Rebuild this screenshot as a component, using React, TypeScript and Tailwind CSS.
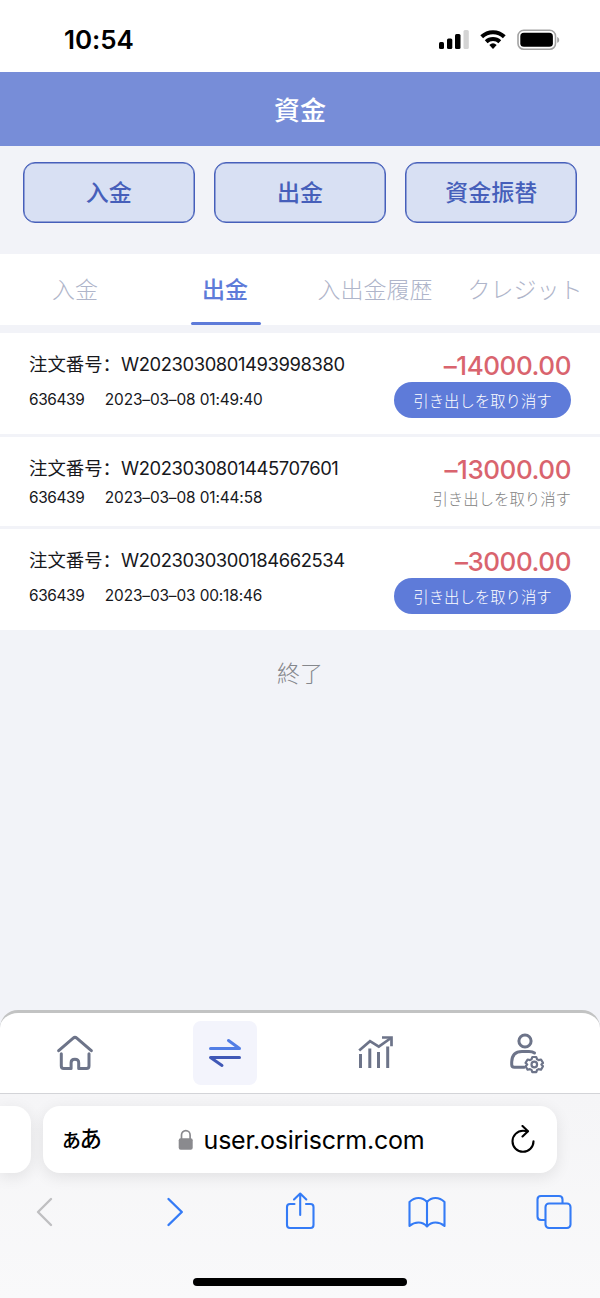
import { useState } from 'react';

interface Withdrawal {
    orderNo: string;
    account: string;
    time: string;
    amount: string;
    cancellable: boolean;
}

const withdrawals: Withdrawal[] = [
    { orderNo: 'W2023030801493998380', account: '636439', time: '2023–03–08 01:49:40', amount: '–14000.00', cancellable: true },
    { orderNo: 'W2023030801445707601', account: '636439', time: '2023–03–08 01:44:58', amount: '–13000.00', cancellable: false },
    { orderNo: 'W2023030300184662534', account: '636439', time: '2023–03–03 00:18:46', amount: '–3000.00', cancellable: true },
];

const actions = ['入金', '出金', '資金振替'];
const tabs = ['入金', '出金', '入出金履歴', 'クレジット'];

function StatusBar() {
    return (
        <div className="flex h-[72px] items-center justify-between bg-white pb-2 pl-[64px] pr-[40px] pt-[16px]">
            <span className="text-[26px] font-semibold leading-none tracking-[-0.1px] text-black">10:54</span>
            <svg width="121" height="22" viewBox="439 29 121 22">
                <rect x="439" y="42" width="5" height="7" rx="1.5" />
                <rect x="447" y="38.5" width="5.3" height="10.5" rx="1.5" />
                <rect x="455" y="34" width="5.5" height="15" rx="1.5" />
                <rect x="463.5" y="30" width="5.3" height="19" rx="1.5" fill="#d4d4d4" />
                <g fill="none" stroke="#000" strokeWidth="4">
                    <path d="M481.7 36.8a16.2 16.2 0 0 1 22.6 0" />
                    <path d="M486.2 41.8a9.8 9.8 0 0 1 13.6 0" />
                </g>
                <path d="M489.3 44.9a5.6 5.6 0 0 1 7.4 0L493 49Z" />
                <rect x="518" y="30.3" width="37.5" height="19" rx="5.8" fill="none" stroke="#a3a3a3" strokeWidth="1.6" />
                <rect x="520.3" y="32.8" width="32.6" height="14" rx="3.6" />
                <path d="M557.2 37c1.3.6 2 1.6 2 2.9s-.7 2.3-2 2.9Z" fill="#a3a3a3" />
            </svg>
        </div>
    );
}

function WithdrawalRow({ item }: { item: Withdrawal }) {
    return (
        <div className="bg-white px-[29px] py-4 text-[#17181c]">
            <div className="flex h-[33px] items-center justify-between">
                <span className="whitespace-nowrap pb-0.5 text-[18.4px]">
                    注文番号：<span className="tracking-[-0.4px]">{item.orderNo}</span>
                </span>
                <span className="text-[26px] font-medium tracking-[-0.45px] text-[#d9646e]">{item.amount}</span>
            </div>
            <div className={`flex items-center justify-between ${item.cancellable ? 'h-9' : 'h-6'}`}>
                <div className="flex gap-[20.5px] text-[15.4px]">
                    <span className="tracking-[-0.38px]">{item.account}</span>
                    <span className="tracking-[-0.12px]">{item.time}</span>
                </div>
                {item.cancellable ? (
                    <button className="h-9 w-[177px] rounded-full bg-[#5e7bd9] pt-1 text-[15.4px] font-light text-white">
                        引き出しを取り消す
                    </button>
                ) : (
                    <span className="pt-1 text-[15.4px] font-light text-[#828282]">引き出しを取り消す</span>
                )}
            </div>
        </div>
    );
}

function BottomNav() {
    return (
        <nav className="grid h-[83px] grid-cols-4 items-center justify-items-center rounded-t-[18px] border-t-[3px] border-[#c2c3c3] bg-white">
            <svg width="36" height="36" viewBox="57 1034.5 36 36" fill="none" stroke="#6d7489" strokeWidth="3" strokeLinecap="round" strokeLinejoin="round">
                <path d="M58.7 1050.2 73.2 1037.7Q75 1036.1 76.8 1037.7L91.3 1050.2" />
                <path d="M61.3 1053.2V1065.5Q61.3 1068 63.7 1068H71.1V1062.3Q71.1 1058.8 74.9 1058.8T78.7 1062.3V1068H86.5Q89 1068 89 1065.5V1053.2" />
            </svg>
            <div className="flex size-16 items-center justify-center rounded-lg bg-[#f3f4fc]">
                <svg width="34" height="30" viewBox="208 1038 34 30" fill="none" strokeWidth="3" strokeLinecap="round" strokeLinejoin="round">
                    <path d="M210.5 1048.5H239.5L228.5 1040.5" stroke="#527ee5" />
                    <path d="M239.5 1057.5H210.5L222 1065.5" stroke="#4058b6" />
                </svg>
            </div>
            <svg width="36" height="36" viewBox="357 1034.5 36 36" fill="none" stroke="#6d7489" strokeWidth="3">
                <path d="M360.5 1053.5V1067.5M369.8 1048V1067.5M378.5 1051.5V1067.5M387.7 1046V1067.5" />
                <path d="M359.2 1050 370 1040.7 378.8 1046.2 391 1037.5" strokeWidth="2.7" />
                <path d="M382 1037H391.5V1045.8" strokeWidth="2.7" />
            </svg>
            <svg width="38" height="42" viewBox="506 1032.5 38 42" fill="none" stroke="#6d7489" strokeWidth="3" strokeLinecap="round">
                <circle cx="525" cy="1041.5" r="6.1" />
                <path d="M534.5 1053.500Q532.5 1051.900 529 1051.900H522Q512 1051.900 511.700 1062.500V1065Q511.700 1067.800 514.500 1067.800H524" />
                <g strokeWidth="2.2" strokeLinejoin="round">
                    <path d="M532.3 1057.500h4l.8 2.300 1.500.8 2.400-.6 2 3.400-1.600 1.700 1.600 1.700-2 3.400-2.400-.6-1.500.8-.8 2.300h-4l-.8-2.300-1.500-.8-2.400.6-2-3.400 1.600-1.700-1.600-1.700 2-3.400 2.400.6 1.500-.8Z" />
                    <circle cx="534.3" cy="1065" r="2.8" />
                </g>
            </svg>
        </nav>
    );
}

function BrowserBar() {
    return (
        <div className="flex h-[205px] flex-col overflow-hidden border-t border-[#d3d4d8] bg-linear-to-b from-[#f5f5f7] to-[#f9f9fa]">
            <div className="flex gap-3 pt-3">
                <div className="h-[67px] w-[31px] rounded-r-[17px] bg-white shadow-[0_4px_16px_rgba(0,0,0,0.09)]" />
                <div className="flex h-[67px] w-[514px] items-center justify-between rounded-[17px] bg-white pl-[17px] pr-[21px] text-black shadow-[0_4px_16px_rgba(0,0,0,0.09)]">
                    <span className="w-[62px] text-[22.5px] font-medium leading-none tracking-[-3px]">ぁあ</span>
                    <span className="mr-[30px] flex items-center gap-[10px] text-[25px] tracking-[-0.25px]">
                        <svg width="16" height="22" viewBox="0 0 16 22">
                            <path d="M3.5 10V6a4.300 4.300 0 0 1 8.600 0v4" fill="none" stroke="#8a8a8e" strokeWidth="1.7" />
                            <rect x=".7" y="9.2" width="14" height="11.5" rx="2" fill="#8a8a8e" />
                        </svg>
                        <span className="pt-0.5">user.osiriscrm.com</span>
                    </span>
                    <svg width="26" height="30" viewBox="510 1125 26 30" fill="none" stroke="#000" strokeWidth="2.1" strokeLinecap="round" strokeLinejoin="round">
                        <path d="M527.5 1131.3Q525 1130.8 523 1130.8A10.5 10.5 0 1 0 533.5 1141.3" />
                        <path d="M522.5 1126 528 1131.3 522.5 1136.5" />
                    </svg>
                </div>
            </div>
            <div className="flex items-center justify-between pl-[25px] pr-[26px] pt-[17px]">
                <svg width="40" height="44" viewBox="25 1190 40 44" fill="none" stroke="#bfbfc1" strokeWidth="2.4" strokeLinecap="round" strokeLinejoin="round">
                    <path d="M51 1199 38 1212 51 1225" />
                </svg>
                <svg width="40" height="44" viewBox="152 1190 40 44" fill="none" stroke="#347bf6" strokeWidth="2.4" strokeLinecap="round" strokeLinejoin="round">
                    <path d="M168.5 1199 181.8 1212 168.5 1225" />
                </svg>
                <svg width="40" height="44" viewBox="280 1190 40 44" fill="none" stroke="#347bf6" strokeWidth="2.1" strokeLinecap="round" strokeLinejoin="round">
                    <path d="M294.5 1204H290Q287 1204 287 1207V1225Q287 1228 290 1228H310.5Q313.5 1228 313.5 1225V1207Q313.5 1204 310.5 1204H306" />
                    <path d="M300.2 1215V1194M294 1199.5 300.2 1193.5 306.3 1199.5" />
                </svg>
                <svg width="40" height="44" viewBox="407 1190 40 44" fill="none" stroke="#347bf6" strokeWidth="2.1" strokeLinejoin="round">
                    <path d="M427 1202Q423.5 1198 418.5 1198T409.5 1202V1226Q413.5 1222.5 418.5 1222.5T427 1226.5Q430.5 1222.5 435.5 1222.5T444.5 1226V1202Q440.5 1198 435.5 1198T427 1202V1226" />
                </svg>
                <svg width="40" height="44" viewBox="534 1190 40 44" fill="none" stroke="#347bf6" strokeWidth="2.1">
                    <path d="M545.5 1220H541Q537.5 1220 537.5 1216.5V1199.5Q537.5 1196 541 1196H559Q562.5 1196 562.5 1199.5V1203.5" />
                    <rect x="545.5" y="1203.5" width="25" height="24.5" rx="3.5" />
                </svg>
            </div>
            <div className="mx-auto mt-auto mb-3 h-2 w-[214px] rounded-full bg-black" />
        </div>
    );
}

export default function App() {
    const [activeTab, setActiveTab] = useState(1);

    return (
        <div className="flex h-[1298px] w-[600px] flex-col overflow-hidden bg-[#f2f3f8] font-['Inter','Noto_Sans_CJK_SC',sans-serif]">
            <StatusBar />
            <header className="flex h-[74px] items-center justify-center bg-[#778dd8] pt-0.5 text-[26px] font-medium text-white">
                資金
            </header>

            {/* Quick actions */}
            <div className="grid h-[108px] grid-cols-3 items-start gap-[19px] px-[22.5px] pt-4">
                {actions.map((label) => (
                    <button
                        key={label}
                        className="h-[61px] rounded-xl border border-[#465fba] bg-[#d8e0f3] pt-0.5 text-[23px] font-medium text-[#465fba] shadow-[inset_0_0_0_0.5px_#465fba]"
                    >
                        {label}
                    </button>
                ))}
            </div>

            {/* Tabs */}
            <div className="mb-2 grid h-[71px] grid-cols-4 bg-white">
                {tabs.map((label, index) => (
                    <button
                        key={label}
                        onClick={() => setActiveTab(index)}
                        className={`flex flex-col items-center whitespace-nowrap text-[23px] ${
                            activeTab === index ? 'font-medium text-[#5e7bd9]' : 'font-light text-[#afb5ca]'
                        }`}
                    >
                        <span className="flex flex-1 items-center pt-1">{label}</span>
                        <span className={`ml-0.5 h-[3px] w-[70px] rounded-full ${activeTab === index ? 'bg-[#5e7bd9]' : ''}`} />
                    </button>
                ))}
            </div>

            <div className="flex flex-col gap-[3px]">
                {withdrawals.map((item) => (
                    <WithdrawalRow key={item.orderNo} item={item} />
                ))}
            </div>
            <p className="pt-[27px] text-center text-[23px] font-light text-[#85878c]">終了</p>

            <div className="mt-auto">
                <BottomNav />
                <BrowserBar />
            </div>
        </div>
    );
}
